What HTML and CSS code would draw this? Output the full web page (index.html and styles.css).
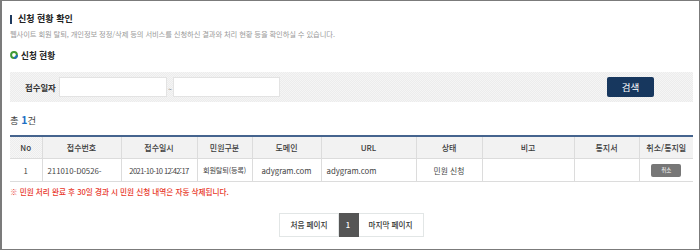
FILE: index.html
```html
<!DOCTYPE html>
<html lang="ko">
<head>
<meta charset="utf-8">
<title>신청 현황 확인</title>
<link rel="stylesheet" href="styles.css">
</head>
<body>
<div class="frame">
  <h2 class="title">신청 현황 확인</h2>
  <p class="desc">웹사이트 회원 탈퇴, 개인정보 정정/삭제 등의 서비스를 신청하신 결과와 처리 현황 등을 확인하실 수 있습니다.</p>
  <h3 class="sub">
    <svg class="dot" viewBox="0 0 8 8" width="8" height="8"><circle cx="4" cy="4" r="2.9" fill="#fff" stroke="#3f9a35" stroke-width="2"/><path d="M6.9 4 A2.9 2.9 0 0 1 4 6.9" fill="none" stroke="#1f6fb8" stroke-width="2"/></svg>
    신청 현황
  </h3>
  <div class="search">
    <span class="label">접수일자</span>
    <input class="field" type="text">
    <span class="tilde">~</span>
    <input class="field field2" type="text">
    <button class="btn" type="button">검색</button>
  </div>
  <p class="total">총 <b>1</b>건</p>
  <table class="list">
    <colgroup>
      <col class="c1"><col class="c2"><col class="c3"><col class="c4"><col class="c5">
      <col class="c6"><col class="c7"><col class="c8"><col class="c9"><col class="c10">
    </colgroup>
    <thead>
      <tr><th>No</th><th>접수번호</th><th>접수일시</th><th>민원구분</th><th>도메인</th><th>URL</th><th>상태</th><th>비고</th><th>통지서</th><th>취소/통지일</th></tr>
    </thead>
    <tbody>
      <tr><td>1</td><td class="left">211010-D0526-</td><td class="tight">2021-10-10 12:42:17</td><td class="kind">회원탈퇴(등록)</td><td>adygram.com</td><td class="left">adygram.com</td><td>민원 신청</td><td></td><td></td><td><span class="cancel">취소</span></td></tr>
    </tbody>
  </table>
  <p class="note">※ 민원 처리 완료 후 30일 경과 시 민원 신청 내역은 자동 삭제됩니다.</p>
  <div class="pager">
    <span class="pg">처음 페이지</span><span class="pg cur">1</span><span class="pg">마지막 페이지</span>
  </div>
</div>
</body>
</html>
```
FILE: styles.css
```css
html, body { margin: 0; padding: 0; background: #fff; }
body { font-family: "Noto Sans CJK KR", "Noto Sans", sans-serif; color: #333; }
.frame {
  width: 700px; height: 250px; box-sizing: border-box;
  border: 1px solid #7b7b7b; border-left-width: 2px;
  padding: 0 6px 0 8px; overflow: hidden;
}
.title {
  margin: 12px 0 0; height: 12px; line-height: 12px;
  font-size: 9px; font-weight: 700; color: #222;
  display: flex; align-items: center; gap: 6px;
}
.title::before { content: ""; width: 2px; height: 9px; background: #1e3a5f; }
.desc { margin: 4px 0 0; height: 10px; line-height: 10px; font-size: 7.3px; color: #9a9a9a; letter-spacing: -0.1px; white-space: nowrap; }
.sub {
  margin: 10px 0 0; height: 12px; line-height: 12px;
  font-size: 8.6px; font-weight: 700; color: #222;
  display: flex; align-items: center; gap: 3px;
}
.dot { display: block; }
.search {
  margin-top: 11px; height: 30px; box-sizing: border-box;
  display: flex; align-items: center; padding: 0 39px 0 15px;
  background: repeating-conic-gradient(#ececec 0 25%, #f5f5f5 0 50%) 0 0 / 2px 2px;
}
.label { width: 34px; font-size: 8.4px; font-weight: 700; color: #333; white-space: nowrap; }
.field {
  width: 108px; height: 20px; box-sizing: border-box; margin: 0;
  border: 1px solid #e3e3e3; background: #fff; padding: 0;
}
.field2 { width: 107px; }
.tilde { width: 6px; text-align: center; font-size: 7px; color: #888; padding-top: 3px; }
.btn {
  margin-left: auto; width: 47px; height: 20px; border: 0; border-radius: 2px;
  background: #17375e; color: #fff; font-family: inherit; font-size: 9.5px; padding: 0;
}
.total { margin: 12px 0 0; height: 12px; line-height: 12px; font-size: 9.3px; color: #444; }
.total b { color: #1d6fc4; font-weight: 700; font-size: 10.5px; }
.list {
  margin-top: 9px; width: 683px; border-collapse: collapse; table-layout: fixed;
  border-top: 2px solid #45648e;
}
.c1 { width: 32px; } .c2 { width: 79px; } .c3 { width: 76px; } .c4 { width: 55px; } .c5 { width: 69px; }
.c6 { width: 95px; } .c7 { width: 66px; } .c8 { width: 92px; } .c9 { width: 65px; } .c10 { width: 54px; }
.list th {
  height: 21px; padding: 0; font-size: 8px; font-weight: 500; color: #3a3a3a;
  background: repeating-conic-gradient(#ededed 0 25%, #f6f6f6 0 50%) 0 0 / 2px 2px;
  border-left: 1px solid #dcdcdc; border-bottom: 1px solid #dcdcdc; white-space: nowrap;
}
.list td {
  height: 22px; padding: 0; font-size: 7.8px; color: #444; text-align: center;
  border-left: 1px solid #dcdcdc; border-bottom: 1px solid #dcdcdc; white-space: nowrap;
}
.list th:first-child, .list td:first-child { border-left: 0; }
.list td.left { text-align: left; padding-left: 5px; }
.list td.tight { letter-spacing: -0.6px; font-size: 7.6px; }
.list td.kind { font-size: 7.2px; letter-spacing: -0.2px; }
.cancel {
  display: inline-block; width: 30px; height: 13px; line-height: 13px; border-radius: 2px;
  background: #777; color: #fff; font-size: 5.5px; vertical-align: middle;
}
.note { margin: 5px 0 0; height: 10px; line-height: 10px; font-size: 7.6px; font-weight: 500; color: #e8372a; white-space: nowrap; }
.pager { margin-top: 16px; width: 683px; display: flex; justify-content: center; }
.pg {
  height: 24px; line-height: 22px; box-sizing: border-box; border: 1px solid #e2e6e6;
  padding: 0 10px; font-size: 7.6px; font-weight: 500; color: #333;
}
.pg + .pg { border-left: 0; }
.pg.cur { width: 20px; padding: 0; text-align: center; background: #555; color: #fff; border-color: #555; }
```
